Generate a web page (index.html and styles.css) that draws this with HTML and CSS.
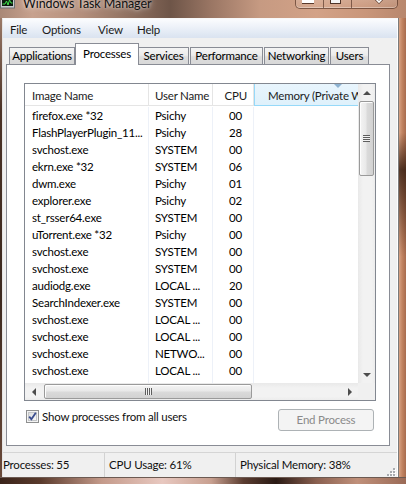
FILE: index.html
```html
<!DOCTYPE html>
<html>
<head>
<meta charset="utf-8">
<link rel="stylesheet" href="styles.css">
</head>
<body>
<div class="window">
  <div class="titlebar">
    <svg class="appicon" width="16" height="9" viewBox="0 0 16 9">
      <rect x="0.5" y="-3" width="14" height="11" fill="#c9ccd0" stroke="#6d6f73"/>
      <rect x="2" y="-2" width="11" height="8" fill="#0c1a10"/>
      <polyline points="2.5,4 5,4 6.5,1 8,5 9.5,0 11,3 12.5,3" fill="none" stroke="#3fe04a" stroke-width="1"/>
    </svg>
    <div class="title">Windows Task Manager</div>
    <div class="caption">
      <div class="cbtn cmin"><span class="minbar"></span></div>
      <div class="cbtn cmax"><span class="maxbox"></span></div>
      <div class="cbtn cclose">
        <svg width="12" height="5" viewBox="0 0 12 5"><path d="M1,-3 L6,2 L11,-3 M6,2 L5,3 M6,2 L7,3" stroke="#5a3a2c" stroke-width="3" fill="none"/><path d="M1,-3 L6,2 L11,-3" stroke="#ffffff" stroke-width="1.6" fill="none"/></svg>
      </div>
    </div>
  </div>
  <div class="middle">
    <div class="lframe"></div>
    <div class="client">
      <div class="menubar">
        <span class="mi mi-file">File</span>
        <span class="mi mi-options">Options</span>
        <span class="mi mi-view">View</span>
        <span class="mi mi-help">Help</span>
      </div>
      <div class="tabs">
        <div class="tab t-apps">Applications</div>
        <div class="tab t-proc selected">Processes</div>
        <div class="tab t-serv">Services</div>
        <div class="tab t-perf">Performance</div>
        <div class="tab t-net">Networking</div>
        <div class="tab t-users">Users</div>
      </div>
      <div class="panel">
        <div class="listview">
          <div class="lv-content">
            <div class="lv-header">
              <div class="hc c1">Image Name</div>
              <div class="hc c2">User Name</div>
              <div class="hc c3">CPU</div>
              <div class="hc c4 sorted"><span class="sortarrow"></span>Memory (Private Working Set)</div>
            </div>
            <div class="lv-rows">
              <div class="row"><div class="c c1">firefox.exe *32</div><div class="c c2">Psichy</div><div class="c c3">00</div><div class="c c4"></div></div>
              <div class="row"><div class="c c1">FlashPlayerPlugin_11...</div><div class="c c2">Psichy</div><div class="c c3">28</div><div class="c c4"></div></div>
              <div class="row"><div class="c c1">svchost.exe</div><div class="c c2">SYSTEM</div><div class="c c3">00</div><div class="c c4"></div></div>
              <div class="row"><div class="c c1">ekrn.exe *32</div><div class="c c2">SYSTEM</div><div class="c c3">06</div><div class="c c4"></div></div>
              <div class="row"><div class="c c1">dwm.exe</div><div class="c c2">Psichy</div><div class="c c3">01</div><div class="c c4"></div></div>
              <div class="row"><div class="c c1">explorer.exe</div><div class="c c2">Psichy</div><div class="c c3">02</div><div class="c c4"></div></div>
              <div class="row"><div class="c c1">st_rsser64.exe</div><div class="c c2">SYSTEM</div><div class="c c3">00</div><div class="c c4"></div></div>
              <div class="row"><div class="c c1">uTorrent.exe *32</div><div class="c c2">Psichy</div><div class="c c3">00</div><div class="c c4"></div></div>
              <div class="row"><div class="c c1">svchost.exe</div><div class="c c2">SYSTEM</div><div class="c c3">00</div><div class="c c4"></div></div>
              <div class="row"><div class="c c1">svchost.exe</div><div class="c c2">SYSTEM</div><div class="c c3">00</div><div class="c c4"></div></div>
              <div class="row"><div class="c c1">audiodg.exe</div><div class="c c2">LOCAL ...</div><div class="c c3">20</div><div class="c c4"></div></div>
              <div class="row"><div class="c c1">SearchIndexer.exe</div><div class="c c2">SYSTEM</div><div class="c c3">00</div><div class="c c4"></div></div>
              <div class="row"><div class="c c1">svchost.exe</div><div class="c c2">LOCAL ...</div><div class="c c3">00</div><div class="c c4"></div></div>
              <div class="row"><div class="c c1">svchost.exe</div><div class="c c2">LOCAL ...</div><div class="c c3">00</div><div class="c c4"></div></div>
              <div class="row"><div class="c c1">svchost.exe</div><div class="c c2">NETWO...</div><div class="c c3">00</div><div class="c c4"></div></div>
              <div class="row"><div class="c c1">svchost.exe</div><div class="c c2">LOCAL ...</div><div class="c c3">00</div><div class="c c4"></div></div>
              <div class="row"><div class="c c1">svchost.exe</div><div class="c c2">LOCAL ...</div><div class="c c3">00</div><div class="c c4"></div></div>
            </div>
          </div>
          <div class="vscroll">
            <div class="sbtn"><span class="arr-up"></span></div>
            <div class="vtrack">
              <div class="vthumb"><span class="vgrip"></span></div>
            </div>
            <div class="sbtn"><span class="arr-down"></span></div>
          </div>
          <div class="hscroll">
            <div class="sbtn"><span class="arr-left"></span></div>
            <div class="htrack">
              <div class="hthumb"><span class="hgrip"></span></div>
            </div>
            <div class="sbtn"><span class="arr-right"></span></div>
          </div>
          <div class="corner"></div>
        </div>
        <div class="bottomrow">
          <label class="chk">
            <svg class="chkbox" width="13" height="13" viewBox="0 0 13 13">
              <defs>
                <linearGradient id="cg" x1="0" y1="0" x2="1" y2="1">
                  <stop offset="0" stop-color="#d9dbdd"/>
                  <stop offset="1" stop-color="#fbfbfb"/>
                </linearGradient>
              </defs>
              <rect x="0.5" y="0.5" width="12" height="12" fill="#f4f4f4" stroke="#8e8f8f"/>
              <rect x="2.5" y="2.5" width="8" height="8" fill="url(#cg)" stroke="#c4c6c8"/>
              <path d="M3.2,6.6 L5.4,9.2 L9.8,2.8" fill="none" stroke="#3a4d8e" stroke-width="1.8"/>
            </svg>
            <span>Show processes from all users</span>
          </label>
          <div class="btn">End Process</div>
        </div>
      </div>
      <div class="statusbar">
        <div class="sb s1">Processes: 55</div>
        <div class="sb s2">CPU Usage: 61%</div>
        <div class="sb s3">Physical Memory: 38%</div>
        <svg class="grip" width="9" height="9" viewBox="0 0 9 9">
          <g fill="#ffffff"><rect x="7" y="2" width="2" height="2"/><rect x="4" y="5" width="2" height="2"/><rect x="7" y="5" width="2" height="2"/><rect x="1" y="8" width="2" height="1"/><rect x="4" y="8" width="2" height="1"/><rect x="7" y="8" width="2" height="1"/></g>
          <g fill="#a9acb0"><rect x="6" y="1" width="2" height="2"/><rect x="3" y="4" width="2" height="2"/><rect x="6" y="4" width="2" height="2"/><rect x="0" y="7" width="2" height="2"/><rect x="3" y="7" width="2" height="2"/><rect x="6" y="7" width="2" height="2"/></g>
        </svg>
      </div>
    </div>
    <div class="rframe"></div>
  </div>
  <div class="bframe"></div>
</div>
</body>
</html>
```
FILE: styles.css
```css
* { box-sizing: border-box; margin: 0; padding: 0; }
html, body { width: 406px; height: 484px; overflow: hidden; }
body {
  font-family: Lato, "Noto Sans", sans-serif;
  font-size: 11.5px;
  letter-spacing: -0.2px;
  color: #000;
  background: #b98a70;
}
.window { display: flex; flex-direction: column; width: 406px; height: 484px; }

/* ---------- title bar ---------- */
.titlebar {
  height: 18px;
  display: flex;
  align-items: flex-start;
  overflow: hidden;
  background: linear-gradient(90deg, #a98877 0%, #c7a18e 8%, #b48f7c 20%, #8f7060 32%, #6e5548 42%, #9a7664 52%, #c69a82 64%, #d3a287 78%, #c9967a 90%, #b8876d 100%);
}
.appicon { display: block; margin-left: 0; flex: none; }
.title {
  margin-left: 7px;
  margin-top: -5px;
  font-family: Lato, "Noto Sans", sans-serif;
  font-size: 12.5px;
  letter-spacing: -0.1px;
  line-height: 18px;
  color: #111;
  text-shadow: 0 0 6px rgba(255,255,255,0.75), 0 0 3px rgba(255,255,255,0.5);
  white-space: nowrap;
}
.caption {
  margin-left: auto;
  margin-right: 8px;
  display: flex;
  height: 9px;
  border: 1px solid rgba(70, 40, 28, 0.6);
  border-top: none;
  border-radius: 0 0 5px 5px;
  box-shadow: inset 0 -1px 0 rgba(255,255,255,0.35);
  overflow: hidden;
}
.cbtn {
  height: 8px;
  display: flex;
  justify-content: center;
  align-items: flex-start;
  background: linear-gradient(180deg, rgba(255,255,255,0.15), rgba(255,255,255,0.05));
}
.cmin { width: 28px; border-right: 1px solid rgba(70, 40, 28, 0.6); }
.cmax { width: 28px; border-right: 1px solid rgba(70, 40, 28, 0.6); }
.cclose { width: 45px; }
.minbar { display: block; width: 12px; height: 3px; background: #fff; box-shadow: 0 1px 0 #5a3a2c; margin-right: 4px; }
.maxbox { display: block; width: 11px; height: 4px; background: #f4f4f4; border: 1px solid #4e3428; border-top: none; margin-right: 4px; }
.cclose svg { display: block; margin-left: 8px; }

/* ---------- frame ---------- */
.middle { display: flex; height: 459px; }
.lframe { width: 2px; background: linear-gradient(180deg, #9b7a68 0%, #4a3226 20%, #3b281e 60%, #6a4a3a 100%); }
.rframe {
  width: 8px;
  border-left: 1px solid #7b7b7b;
  background-image:
    linear-gradient(180deg, rgba(0,0,0,0) 0%, rgba(0,0,0,0) 25%, rgba(40,20,10,0.75) 33%, rgba(40,20,10,0.4) 42%, rgba(0,0,0,0) 52%, rgba(0,0,0,0) 100%),
    linear-gradient(90deg, #d7a385 0%, #c28462 45%, #a86c4e 100%);
}
.bframe {
  height: 7px;
  border-top: 1px solid #6c5a52;
  background: linear-gradient(90deg, #3a241a 0%, #5a3a2c 10%, #c49a8a 25%, #e8c8c0 40%, #c8a090 52%, #5a3c30 60%, #2a1a14 68%, #8a6050 78%, #c0907a 88%, #9a6a56 100%);
}

/* ---------- client ---------- */
.client {
  width: 396px;
  display: flex;
  flex-direction: column;
  background: #f0f0f0;
  border-top: 1px solid #f8f8f8;
  border-left: 1px solid #e4e4e4;
  border-right: 1px solid #ffffff;
}
.menubar {
  height: 19px;
  display: flex;
  align-items: center;
  background: linear-gradient(180deg, #fbfcfe 0%, #eef2f9 40%, #e0e8f3 80%, #dae3f0 100%);
  padding-left: 7px;
}
.mi { display: block; color: #1a1a1a; line-height: 19px; padding-top: 1px; }
.mi-file { width: 32px; }
.mi-options { width: 56px; }
.mi-view { width: 39px; }
.mi-help { width: 30px; }

/* ---------- tabs ---------- */
.tabs {
  margin-top: 5px;
  height: 21px;
  display: flex;
  align-items: flex-end;
  padding-left: 6px;
  position: relative;
  z-index: 2;
}
.tab {
  height: 17px;
  border: 1px solid #898c95;
  border-bottom: none;
  background: linear-gradient(180deg, #f4f4f4 0%, #ececec 45%, #dedede 55%, #d8d8d8 100%);
  text-align: center;
  line-height: 16px;
  white-space: nowrap;
  color: #000;
}
.tab.selected {
  height: 22px;
  margin-bottom: -1px;
  background: #fff;
  line-height: 19px;
}
.t-apps { width: 66px; }
.t-proc { width: 64px; }
.t-serv { width: 50px; border-left: none; }
.t-perf { width: 73px; margin-left: 1px; }
.t-net { width: 65px; margin-left: 1px; }
.t-users { width: 39px; margin-left: 1px; }

/* ---------- panel ---------- */
.panel {
  margin-left: 3px;
  width: 384px;
  height: 382px;
  background: #fff;
  border: 1px solid #898c95;
  padding-top: 18px;
  padding-left: 17px;
  display: flex;
  flex-direction: column;
}
.listview {
  width: 352px;
  height: 318px;
  border: 1px solid #828790;
  display: grid;
  grid-template-columns: 333px 17px;
  grid-template-rows: 299px 17px;
  background: #fff;
}
.lv-content { overflow: hidden; }
.lv-header {
  display: flex;
  height: 22px;
  border-bottom: 1px solid #e5e5e5;
}
.hc {
  height: 21px;
  line-height: 23px;
  white-space: nowrap;
  overflow: hidden;
  color: #1c1c1c;
  border-right: 1px solid #e5e5e5;
}
.c1 { width: 124px; flex: none; padding-left: 7px; }
.c2 { width: 64px; flex: none; padding-left: 6px; }
.c3 { width: 41px; flex: none; text-align: right; }
.c4 { width: 104px; flex: none; }
.hc.c3 { padding-right: 6px; }
.hc.c4 {
  border-right: none;
  padding-left: 13px;
  position: relative;
  height: 22px;
  background: linear-gradient(180deg, #e8f5fd 0%, #dff1fb 100%);
  border-left: 1px solid #96d9f9;
  border-bottom: 1px solid #96d9f9;
  text-overflow: clip;
}
.sortarrow {
  position: absolute;
  top: 0;
  left: 79px;
  width: 0;
  height: 0;
  border-left: 4px solid transparent;
  border-right: 4px solid transparent;
  border-top: 4px solid #8db2d1;
}
.lv-rows { height: 277px; overflow: hidden; padding-top: 1px; }
.row { display: flex; height: 17px; }
.c {
  height: 17px;
  line-height: 17px;
  white-space: nowrap;
  overflow: hidden;
  border-right: 1px solid #edf1f8;
}
.c.c3 { padding-right: 11px; }
.c.c4 { border-right: none; }

/* ---------- scrollbars ---------- */
.vscroll {
  display: flex;
  flex-direction: column;
  background: linear-gradient(90deg, #e9e9e9 0%, #f2f2f2 30%, #f2f2f2 80%, #ececec 100%);
}
.sbtn {
  width: 17px;
  height: 17px;
  flex: none;
  display: flex;
  align-items: center;
  justify-content: center;
}
.vtrack { flex: 1; display: flex; flex-direction: column; }
.vthumb {
  margin-left: 1px;
  width: 15px;
  height: 75px;
  border: 1px solid #9a9a9a;
  border-radius: 2px;
  background: linear-gradient(90deg, #f4f4f4 0%, #e9e9e9 45%, #dadada 55%, #d2d2d2 100%);
  box-shadow: inset 1px 1px 0 #fdfdfd;
  display: flex;
  align-items: center;
  justify-content: center;
}
.vgrip {
  display: block;
  width: 7px;
  height: 7px;
  background: repeating-linear-gradient(180deg, #5e5e5e 0 1px, #f2f2f2 1px 2px);
}
.hscroll {
  display: flex;
  background: linear-gradient(180deg, #e9e9e9 0%, #f2f2f2 30%, #f2f2f2 80%, #ececec 100%);
}
.htrack { flex: 1; display: flex; align-items: center; }
.hthumb {
  margin-left: 2px;
  width: 208px;
  height: 15px;
  border: 1px solid #9a9a9a;
  border-radius: 2px;
  background: linear-gradient(180deg, #f4f4f4 0%, #e9e9e9 45%, #dadada 55%, #d2d2d2 100%);
  box-shadow: inset 1px 1px 0 #fdfdfd;
  display: flex;
  align-items: center;
  justify-content: center;
}
.hgrip {
  display: block;
  width: 7px;
  height: 7px;
  background: repeating-linear-gradient(90deg, #5e5e5e 0 1px, #f2f2f2 1px 2px);
}
.corner { background: #f0f0f0; }
.arr-up, .arr-down, .arr-left, .arr-right { display: block; width: 0; height: 0; }
.arr-up { border-left: 4px solid transparent; border-right: 4px solid transparent; border-bottom: 4px solid #4d4d4d; }
.arr-down { border-left: 4px solid transparent; border-right: 4px solid transparent; border-top: 4px solid #4d4d4d; }
.arr-left { border-top: 4px solid transparent; border-bottom: 4px solid transparent; border-right: 4px solid #4d4d4d; }
.arr-right { border-top: 4px solid transparent; border-bottom: 4px solid transparent; border-left: 4px solid #4d4d4d; }

/* ---------- bottom row ---------- */
.bottomrow {
  margin-top: 8px;
  display: flex;
  align-items: flex-start;
  width: 350px;
}
.chk {
  margin-left: 2px;
  margin-top: 1px;
  display: flex;
  align-items: center;
  gap: 3px;
  color: #111;
  white-space: nowrap;
}
.chkbox { display: block; flex: none; }
.btn {
  margin-left: auto;
  width: 96px;
  height: 22px;
  border: 1px solid #adb2b5;
  border-radius: 3px;
  background: #f4f4f4;
  color: #8a8a8a;
  text-align: center;
  line-height: 20px;
}

/* ---------- status bar ---------- */
.statusbar {
  margin-top: 6px;
  height: 25px;
  border-top: 1px solid #d5d5d5;
  display: flex;
  align-items: center;
  background: #f0f0f0;
}
.sb { height: 24px; line-height: 24px; white-space: nowrap; color: #111; }
.s1 { width: 102px; border-right: 1px solid #d2d2d2; }
.s2 { width: 131px; padding-left: 4px; border-right: 1px solid #d2d2d2; }
.s3 { width: 150px; padding-left: 4px; }
.grip { display: block; margin-left: auto; margin-right: 1px; align-self: flex-end; margin-bottom: 1px; }
```
